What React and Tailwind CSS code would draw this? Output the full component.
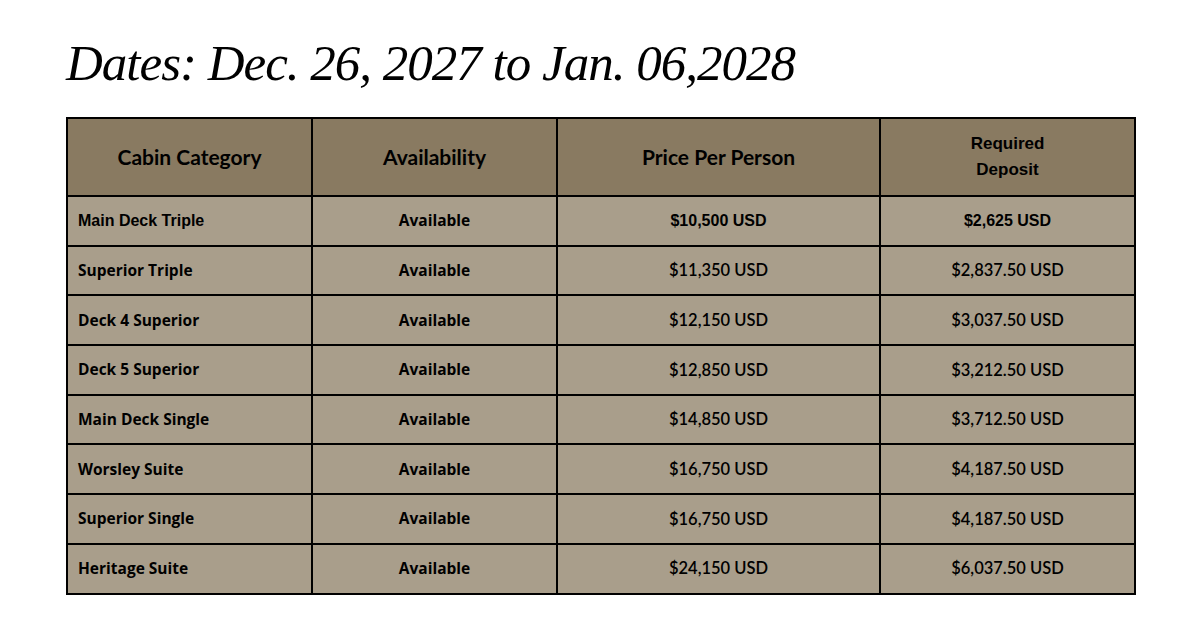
const rows = [
  { name: "Main Deck Triple", price: "$10,500 USD", deposit: "$2,625 USD", arial: true },
  { name: "Superior Triple", price: "$11,350 USD", deposit: "$2,837.50 USD" },
  { name: "Deck 4 Superior", price: "$12,150 USD", deposit: "$3,037.50 USD" },
  { name: "Deck 5 Superior", price: "$12,850 USD", deposit: "$3,212.50 USD" },
  { name: "Main Deck Single", price: "$14,850 USD", deposit: "$3,712.50 USD" },
  { name: "Worsley Suite", price: "$16,750 USD", deposit: "$4,187.50 USD" },
  { name: "Superior Single", price: "$16,750 USD", deposit: "$4,187.50 USD" },
  { name: "Heritage Suite", price: "$24,150 USD", deposit: "$6,037.50 USD" },
];

export default function App() {
  return (
    <div className="w-[1200px] h-[630px] bg-white pl-[66px] pt-[32px]">
      <h1 className="text-[51px] leading-[62px] italic text-black tracking-[-1px] font-['Liberation_Serif',serif] mb-[23px]">
        Dates: Dec. 26, 2027 to Jan. 06,2028
      </h1>

      <table className="border-collapse border-2 border-black text-black">
        <thead>
          <tr className="bg-[#897a61] h-[78px] font-['Lato',sans-serif] text-[21px]">
            <th className="w-[245px] border-2 border-black font-bold">Cabin Category</th>
            <th className="w-[245px] border-2 border-black font-bold">Availability</th>
            <th className="w-[323px] border-2 border-black font-bold">Price Per Person</th>
            <th className="w-[255px] border-2 border-black font-semibold font-['Liberation_Sans',sans-serif] text-[17px] leading-[26px]">
              Required
              <br />
              Deposit
            </th>
          </tr>
        </thead>
        <tbody>
          {rows.map((r) => (
            <tr key={r.name} className="bg-[#a99e8b] h-[49.7px]">
              <td
                className={
                  r.arial
                    ? "border-2 border-black pl-[10px] font-['Liberation_Sans',sans-serif] font-bold text-[16px]"
                    : "border-2 border-black pl-[10px] font-['Open_Sans',sans-serif] font-bold text-[15.5px]"
                }
              >
                {r.name}
              </td>
              <td className="border-2 border-black text-center font-['Open_Sans',sans-serif] font-bold text-[15.5px]">
                Available
              </td>
              <td
                className={
                  r.arial
                    ? "border-2 border-black text-center font-['Liberation_Sans',sans-serif] font-bold text-[16px]"
                    : "border-2 border-black text-center font-['Lato',sans-serif] font-semibold text-[16.5px]"
                }
              >
                {r.price}
              </td>
              <td
                className={
                  r.arial
                    ? "border-2 border-black text-center font-['Liberation_Sans',sans-serif] font-bold text-[16px]"
                    : "border-2 border-black text-center font-['Lato',sans-serif] font-semibold text-[16.5px]"
                }
              >
                {r.deposit}
              </td>
            </tr>
          ))}
        </tbody>
      </table>
    </div>
  );
}
